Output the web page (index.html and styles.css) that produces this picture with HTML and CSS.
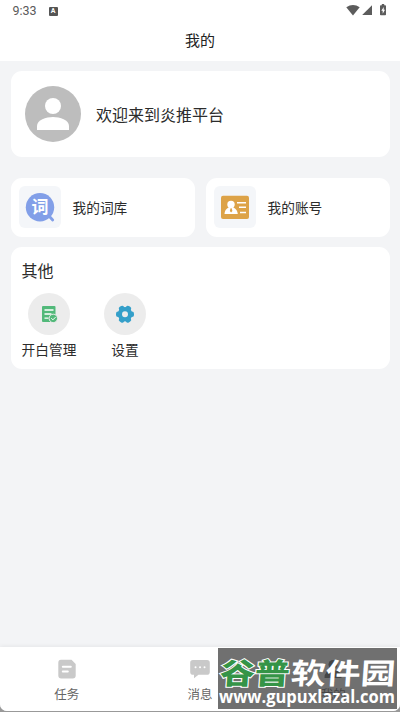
FILE: index.html
```html
<!DOCTYPE html>
<html lang="zh-CN">
<head>
<meta charset="utf-8">
<meta name="viewport" content="width=device-width, initial-scale=1">
<title>我的</title>
<link rel="stylesheet" href="styles.css">
</head>
<body>
<div class="screen">
  <header class="top">
    <div class="status">
      <span class="time">9:33</span>
      <span class="badge">A</span>
      <svg class="signals" width="42" height="14" viewBox="0 0 42 14" fill="#5c5c5c">
        <path d="M.3 3.2Q7 -1.2 13.7 3.2L7 11.5Z"/>
        <path d="M26 1.2V11H16.2Z"/>
        <path d="M34.8 1.3h1V0h2.4v1.3h1q.8 0 .8.8v8.3q0 .8-.8.8h-4.4q-.8 0-.8-.8V2.1q0-.8.8-.8Z"/>
        <path d="M37.7 3 35.3 6.7h1.4v3l2.3-3.9h-1.3Z" fill="#fff"/>
      </svg>
    </div>
    <h1>我的</h1>
  </header>
  <main>
    <section class="card profile">
      <svg width="56" height="56" viewBox="0 0 56 56">
        <circle cx="28" cy="28" r="28" fill="#bdbdbd"/>
        <circle cx="28" cy="20" r="8" fill="#fff"/>
        <path d="M12 44V40C12 34 21 31 28 31S44 34 44 40V44Z" fill="#fff"/>
      </svg>
      <span>欢迎来到炎推平台</span>
    </section>
    <div class="shortcuts">
      <section class="card shortcut">
        <div class="tile">
          <svg width="42" height="42" viewBox="0 0 42 42">
            <circle cx="21" cy="21.3" r="14.2" fill="#829fe8"/>
            <path d="M30.5 30.5 33.7 34" stroke="#829fe8" stroke-width="2.8" stroke-linecap="round"/>
            <text class="word" x="12.5" y="27.3">词</text>
          </svg>
        </div>
        <span>我的词库</span>
      </section>
      <section class="card shortcut account">
        <div class="tile">
          <svg width="42" height="42" viewBox="0 0 42 42">
            <rect x="7" y="9.7" width="28" height="23.3" rx="2" fill="#dda348"/>
            <circle cx="17" cy="18.5" r="3.7" fill="#fff"/>
            <path d="M10.5 28Q10.5 23.5 15 21.2H19Q23.5 23.5 23.8 28Z" fill="#fff"/>
            <path d="M16.6 22.2h1l.8 2.8-1.3 1.6-1.3-1.6Z" fill="#dda348"/>
            <path d="M23 16.7h9M25 21.3h7M26 26.5h6" stroke="#fff" stroke-width="1.6"/>
          </svg>
        </div>
        <span>我的账号</span>
      </section>
    </div>
    <section class="card others">
      <h2>其他</h2>
      <div class="tools">
        <div class="tool">
          <svg width="42" height="42" viewBox="0 0 42 42">
            <circle cx="21" cy="21" r="21" fill="#ececec"/>
            <rect x="14" y="13" width="13.5" height="16" rx="1" fill="#52b97a"/>
            <path d="M16.5 17h9M16.5 21h7M16.5 25.2h4" stroke="#fff" stroke-width="1.3"/>
            <circle cx="25.3" cy="25.4" r="4.2" fill="#52b97a" stroke="#ececec"/>
            <path d="m23.3 25.2 1.6 1.6 2.7-2.7" fill="none" stroke="#fff"/>
          </svg>
          <span>开白管理</span>
        </div>
        <div class="tool">
          <svg width="42" height="42" viewBox="0 0 42 42">
            <circle cx="21" cy="21" r="21" fill="#ececec"/>
            <g fill="#349fc9">
              <circle cx="21" cy="21.2" r="7.3"/>
              <rect x="12" y="18.4" width="18" height="5.6" rx="2"/>
              <rect x="12" y="18.4" width="18" height="5.6" rx="2" transform="rotate(60 21 21.2)"/>
              <rect x="12" y="18.4" width="18" height="5.6" rx="2" transform="rotate(120 21 21.2)"/>
            </g>
            <circle cx="21" cy="21.2" r="3" fill="#ececec"/>
          </svg>
          <span>设置</span>
        </div>
      </div>
    </section>
  </main>
  <nav>
    <div class="tab">
      <svg width="20" height="20" viewBox="0 0 20 20">
        <path d="M4 .8h10.5L18.7 5V16.5q0 3-3 3H4.3q-3 0-3-3V3.8q0-3 2.7-3Z" fill="#c9c9c9"/>
        <path d="M5.8 7.8h8M5.8 12.6h5" stroke="#fff" stroke-width="2" stroke-linecap="round"/>
      </svg>
      <span>任务</span>
    </div>
    <div class="tab">
      <svg width="20" height="20" viewBox="0 0 20 20">
        <path d="M3 1h14q2.8 0 2.8 2.8v9.1q0 2.8-2.8 2.8H8.5L4 19.3v-3.6H3Q.2 15.7.2 12.9V3.8Q.2 1 3 1Z" fill="#c9c9c9"/>
        <path d="M5.5 8.3h.1M10 8.3h.1M14.5 8.3h.1" stroke="#fff" stroke-width="1.9" stroke-linecap="round"/>
      </svg>
      <span>消息</span>
    </div>
    <div class="tab current">
      <svg width="20" height="20" viewBox="0 0 20 20" fill="#111">
        <circle cx="10" cy="5.5" r="4.5"/>
        <path d="M1.5 19q0-8 8.5-8t8.5 8Z"/>
      </svg>
      <span>我的</span>
    </div>
  </nav>
  <svg class="watermark" width="179" height="61" viewBox="0 0 179 61">
    <rect width="179" height="61" fill="#505050" fill-opacity=".82"/>
    <g class="brand" transform="translate(1.5 35.8) skewX(-4) scale(1.2 1)">
      <text class="green" x="0" y="0" textLength="58">谷普</text>
      <text class="white" x="59" y="0" textLength="87">软件园</text>
    </g>
    <text class="url" x="1" y="55" textLength="176" lengthAdjust="spacingAndGlyphs">www.gupuxlazal.com</text>
  </svg>
</div>
</body>
</html>
```
FILE: styles.css
```css
* { box-sizing: border-box; }
body {
  margin: 0;
  background: #999;
  font-family: Roboto, "Noto Sans CJK SC", sans-serif;
  color: #2c2c2c;
}
svg { display: block; flex: none; }
span, h1, h2 { white-space: nowrap; }
.screen {
  position: relative;
  display: flex;
  flex-direction: column;
  width: 400px;
  height: 711px;
  overflow: hidden;
  background: #f3f4f6;
  border-radius: 0 0 7px 7px;
}
.top { height: 61px; background: #fff; }
.status {
  display: flex;
  align-items: center;
  height: 22px;
  padding: 0 12px 0 12.5px;
}
.time { font-size: 12.5px; line-height: 22px; color: #5a5a5a; }
.badge {
  width: 9px;
  height: 9px;
  margin-left: 12px;
  border-radius: 1px;
  background: #555;
  color: #fff;
  font-size: 7px;
  font-weight: 700;
  line-height: 9px;
  text-align: center;
}
.signals { margin: 0 0 0 auto; }
h1 {
  margin: 8px 0 0;
  font-size: 15px;
  font-weight: 400;
  line-height: 22px;
  text-align: center;
  color: #222;
}
main { padding: 10px 10px 0 11px; flex: 1; }
.card { background: #fff; border-radius: 11px; }
.profile {
  display: flex;
  align-items: center;
  gap: 15px;
  height: 86px;
  padding-left: 14px;
  font-size: 16px;
}
.shortcuts { display: flex; gap: 11px; margin: 21px 0 10px; }
.shortcut {
  display: flex;
  flex: 1;
  align-items: center;
  gap: 11.5px;
  height: 59px;
  padding: 0 0 1px 8px;
  font-size: 13.7px;
}
.tile { width: 42px; height: 42px; border-radius: 6px; background: #f4f6f9; }
.word { font: 700 17px "Noto Sans CJK SC", sans-serif; fill: #fff; }
.others { height: 122px; padding: 14px 0 0 10.5px; }
h2 { margin: 0; font-size: 16px; font-weight: 400; line-height: 22px; }
.tools { display: flex; gap: 21px; margin-top: 10px; }
.tool {
  display: flex;
  flex-direction: column;
  align-items: center;
  gap: 5px;
  width: 55px;
  font-size: 13.7px;
  line-height: 20px;
}
nav {
  display: flex;
  height: 64px;
  padding-top: 12px;
  background: #fff;
  box-shadow: 0 -1px 4px rgba(0, 0, 0, .06);
}
.tab {
  display: flex;
  flex: 1;
  flex-direction: column;
  align-items: center;
  gap: 7px;
  font-size: 12.5px;
  line-height: 18px;
  color: #666;
}
.current { color: #111; }
.watermark { position: absolute; left: 218px; top: 648px; }
.brand { font: 900 29px "Noto Sans CJK SC", sans-serif; }
.green { fill: #359447; stroke: #fff; stroke-width: 2px; paint-order: stroke; }
.white { fill: #fff; font-weight: 700; }
.url { font: 700 17.5px "Open Sans", sans-serif; fill: #fff; }
```
